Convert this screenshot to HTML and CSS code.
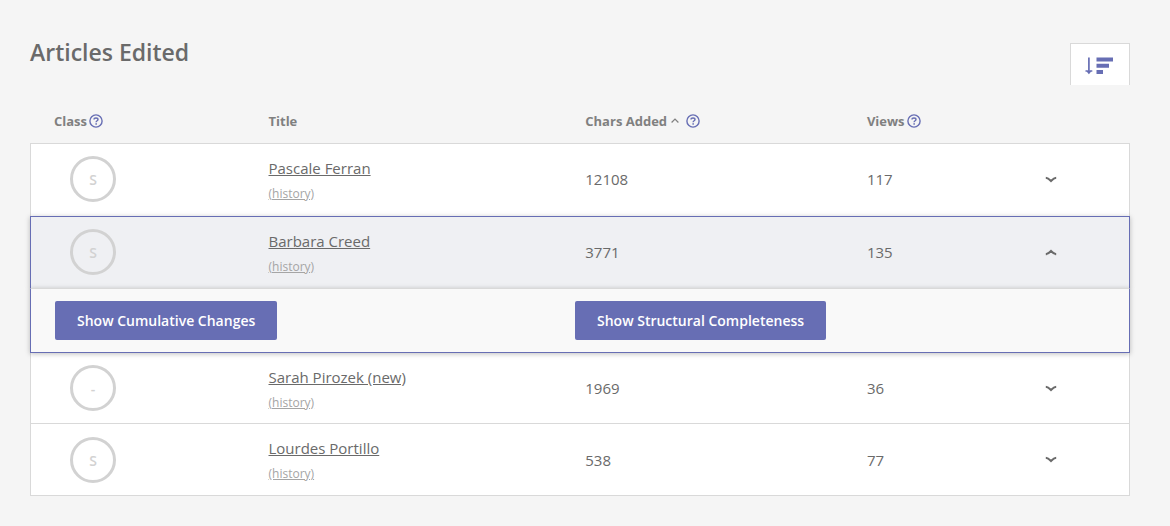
FILE: index.html
```html
<!DOCTYPE html>
<html lang="en">
<head>
<meta charset="utf-8">
<title>Articles Edited</title>
<link rel="stylesheet" href="styles.css">
</head>
<body>
<svg class="defs" aria-hidden="true">
  <symbol id="help" viewBox="0 0 14 14"><circle cx="7" cy="7" r="6.1" fill="none" stroke="currentColor" stroke-width="1.4"/><path d="M5 5.4C5 3.5 9 3.4 9 5.5C9 6.8 7.1 6.7 7.1 8.3" fill="none" stroke="currentColor" stroke-width="1.4"/><rect x="6.4" y="9.2" width="1.5" height="1.5" fill="currentColor"/></symbol>
  <symbol id="chevron" viewBox="0 0 12 7"><path d="M.8 1.7C2.4 1.8 4.4 3.3 6 5C7.6 3.3 9.6 1.8 11.2 1.7" fill="none" stroke="currentColor" stroke-width="2"/></symbol>
</svg>
<main class="page">
  <header class="section-header">
    <h1 class="section-title">Articles Edited</h1>
    <button class="sort-button" type="button" aria-label="Sort articles">
      <svg class="sort-icon" viewBox="0 0 28 18" aria-hidden="true"><path d="M3.9 .5V16.5M.5 14H2.3L3.9 16L5.5 14H7.3" fill="none" stroke="currentColor" stroke-width="1.7"/><path d="M11.5 .6H28V4.6H11.5ZM11.5 6.7H24V10.7H11.5ZM11.5 12.9H18V16.9H11.5Z" fill="currentColor"/></svg>
    </button>
  </header>
  <table class="articles">
    <colgroup><col class="col-class"><col class="col-title"><col class="col-chars"><col class="col-views"><col class="col-toggle"></colgroup>
    <thead>
      <tr>
        <th scope="col"><span class="heading">Class<button class="help" type="button" aria-label="About class"><svg><use href="#help"/></svg></button></span></th>
        <th scope="col">Title</th>
        <th scope="col" aria-sort="ascending"><span class="heading">Chars Added<svg class="sorted" viewBox="0 0 8 5" aria-hidden="true"><path d="M.6 4.5L4 1L7.4 4.5" fill="none" stroke="currentColor" stroke-width="1.2"/></svg><button class="help" type="button" aria-label="About characters added"><svg><use href="#help"/></svg></button></span></th>
        <th scope="col"><span class="heading">Views<button class="help" type="button" aria-label="About views"><svg><use href="#help"/></svg></button></span></th>
        <th></th>
      </tr>
    </thead>
    <tbody>
      <tr class="article before-open">
        <td><div class="rating">s</div></td>
        <td><div class="links"><a class="title" href="#pascale">Pascale Ferran</a><a class="history" href="#pascale-history">(history)</a></div></td>
        <td>12108</td><td>117</td>
        <td><button class="toggle" type="button" aria-label="Expand"><svg><use href="#chevron"/></svg></button></td>
      </tr>
      <tr class="article open">
        <td><div class="rating">s</div></td>
        <td><div class="links"><a class="title" href="#barbara">Barbara Creed</a><a class="history" href="#barbara-history">(history)</a></div></td>
        <td>3771</td><td>135</td>
        <td><button class="toggle" type="button" aria-label="Collapse" aria-expanded="true"><svg><use href="#chevron"/></svg></button></td>
      </tr>
      <tr class="drawer">
        <td colspan="5"><div class="actions"><div><button class="button" type="button">Show Cumulative Changes</button></div><div><button class="button" type="button">Show Structural Completeness</button></div></div></td>
      </tr>
      <tr class="article after-open">
        <td><div class="rating">-</div></td>
        <td><div class="links"><a class="title" href="#sarah">Sarah Pirozek (new)</a><a class="history" href="#sarah-history">(history)</a></div></td>
        <td>1969</td><td>36</td>
        <td><button class="toggle" type="button" aria-label="Expand"><svg><use href="#chevron"/></svg></button></td>
      </tr>
      <tr class="article">
        <td><div class="rating">s</div></td>
        <td><div class="links"><a class="title" href="#lourdes">Lourdes Portillo</a><a class="history" href="#lourdes-history">(history)</a></div></td>
        <td>538</td><td>77</td>
        <td><button class="toggle" type="button" aria-label="Expand"><svg><use href="#chevron"/></svg></button></td>
      </tr>
    </tbody>
  </table>
</main>
</body>
</html>
```
FILE: styles.css
```css
* { box-sizing: border-box; }
body {
  margin: 0;
  background: #f5f5f5;
  color: #6a6a6a;
  font-family: "Open Sans", sans-serif;
  font-size: 15px;
}
button {
  border: 0;
  padding: 0;
  background: none;
  font-family: inherit;
  cursor: pointer;
}
svg { display: block; }
.defs { position: absolute; width: 0; height: 0; }
.page { padding: 30px 40px 30px 30px; }
.section-header {
  display: flex;
  justify-content: space-between;
  align-items: flex-start;
}
.section-title {
  margin: 6px 0 0;
  font-size: 23px;
  line-height: 32px;
  font-weight: 600;
}
.sort-button {
  display: flex;
  align-items: center;
  width: 60px;
  height: 42px;
  margin-top: 13px;
  padding: 2px 0 0 14px;
  border: 1px solid #d9d9d9;
  border-bottom: 0;
  background: #fff;
  color: #676eb4;
}
.sort-icon { width: 28px; height: 18px; }
.articles {
  width: 100%;
  table-layout: fixed;
  border-spacing: 0;
}
.col-class { width: 19.5%; }
.col-title { width: 28.8%; }
.col-chars { width: 25.6%; }
.col-views { width: 15.7%; }
th {
  height: 58px;
  padding: 13px 0 0 24px;
  text-align: left;
  font-size: 13px;
  line-height: 18px;
  font-weight: 700;
  color: #808080;
}
.heading { display: flex; align-items: center; gap: 2px; }
.help, .help svg { width: 14px; height: 14px; }
.help { color: #676eb4; }
.sorted { width: 8px; height: 5px; margin: 0 5px 0 2px; }
td { padding: 0; }
.article { background: #fff; }
.article td {
  height: 72px;
  padding: 0 0 0 24px;
  border-top: 1px solid #d9d9d9;
}
.article td:first-child { border-left: 1px solid #d9d9d9; }
.article td:last-child { border-right: 1px solid #d9d9d9; }
.article:last-child td { height: 73px; border-bottom: 1px solid #d9d9d9; }
.before-open td { height: 73px; padding-bottom: 2px; }
.after-open td { height: 70px; border-top: 0; }
.rating {
  width: 46px;
  height: 46px;
  margin-left: 15px;
  border: 3px solid #d2d2d2;
  border-radius: 50%;
  color: #d2d2d2;
  font-size: 14px;
  font-weight: 600;
  text-transform: uppercase;
  text-align: center;
  line-height: 42px;
}
.links { padding-top: 5px; }
.title {
  display: block;
  width: fit-content;
  color: #6a6a6a;
  line-height: 24px;
}
.history {
  display: block;
  width: fit-content;
  color: #a5a5a5;
  font-size: 12px;
  line-height: 28px;
}
.toggle { display: block; margin-left: 5px; color: #6a6a6a; }
.toggle svg { width: 12px; height: 7px; }
.toggle[aria-expanded] svg { transform: rotate(180deg); }
.open, .drawer { position: relative; box-shadow: 0 1px 5px rgba(0, 0, 0, .25); }
.open { background: #eff0f3; }
.article.open td { padding-bottom: 1px; border-color: #676eb4; }
.drawer { background: #f9f9f9; }
.drawer td {
  height: 65px;
  border: 1px solid #676eb4;
  border-top-color: #d9d9d9;
}
.actions {
  display: grid;
  grid-template-columns: 1fr 1fr;
  padding: 12px 34px 12px 24px;
}
.button {
  height: 39px;
  padding: 0 22px;
  border-radius: 2px;
  background: #676eb4;
  color: #fff;
  font-size: 14px;
  font-weight: 600;
}
```
